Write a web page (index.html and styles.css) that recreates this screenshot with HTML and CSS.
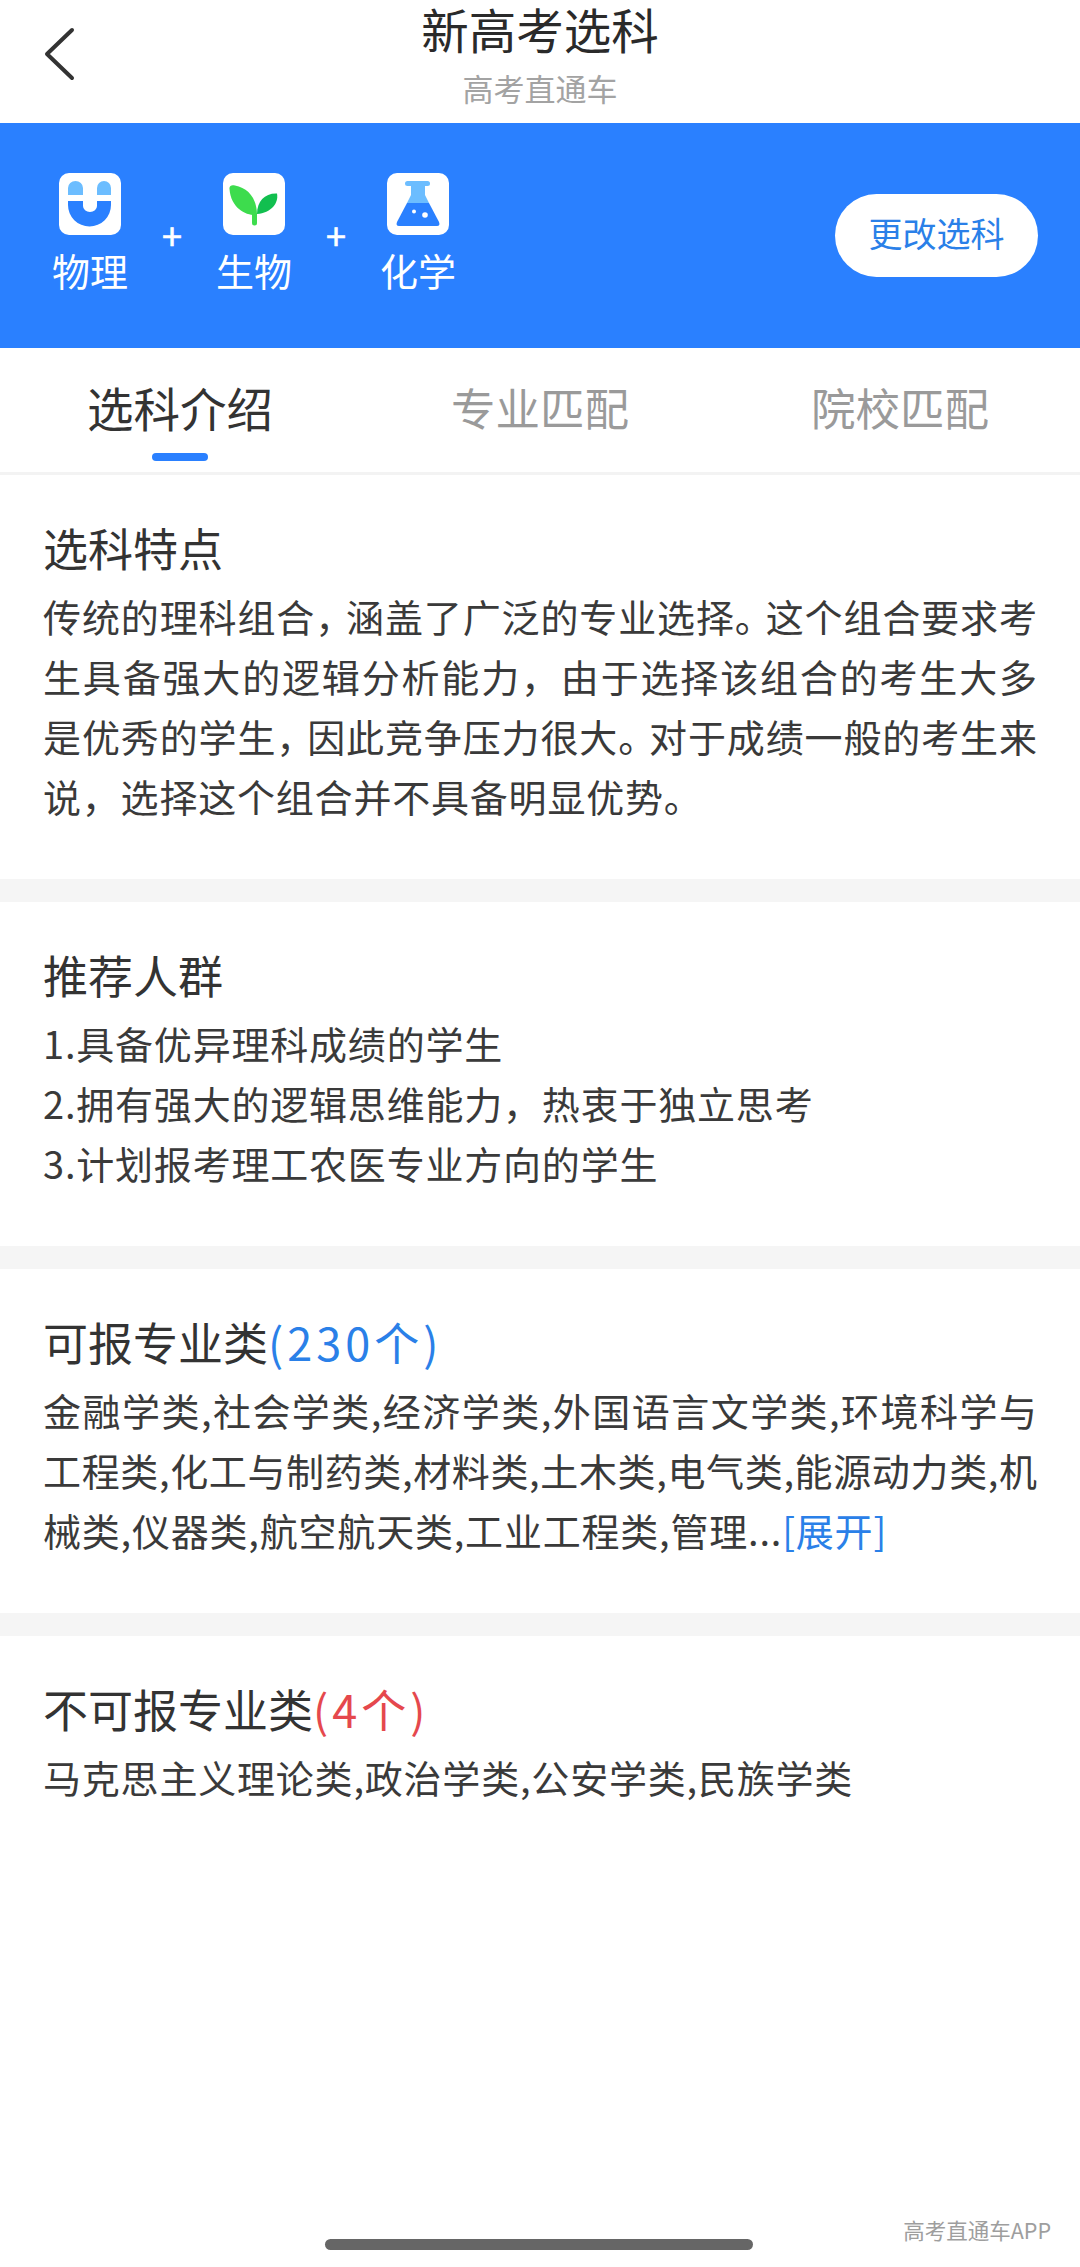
FILE: index.html
```html
<!DOCTYPE html>
<html lang="zh-CN">
  <head>
    <meta charset="UTF-8" />
    <title>新高考选科</title>
    <link rel="stylesheet" href="styles.css">
  </head>
  <body>
    <div class="page">
      <!-- ヘッダー -->
      <header class="top-bar">
        <svg class="back" width="36" height="56" viewBox="0 0 36 56">
          <path d="M31 4 L6 28 L31 52" fill="none" stroke="#333" stroke-width="4" stroke-linecap="round" stroke-linejoin="round" />
        </svg>
        <h1 class="page-title">新高考选科</h1>
        <p class="page-sub">高考直通车</p>
      </header>

      <!-- 選択科目 -->
      <section class="subject-bar">
        <div class="subjects">
          <div class="subject">
            <svg class="tile" viewBox="0 0 62 62">
              <rect width="62" height="62" rx="10" fill="#fff" />
              <path d="M9 15 a7.5 7 0 0 1 15 0 V22 H9 Z" fill="#6cbdff" />
              <path d="M38 15 a7 7 0 0 1 14 0 V22 H38 Z" fill="#6cbdff" />
              <path d="M9 28 H24 V33 a7 6 0 0 0 14 0 V28 H52 V32 a21.5 21.5 0 0 1 -43 0 Z" fill="#2a80ff" />
            </svg>
            <span class="subject-name">物理</span>
          </div>
          <span class="plus">+</span>
          <div class="subject">
            <svg class="tile" viewBox="0 0 62 62">
              <rect width="62" height="62" rx="10" fill="#fff" />
              <path d="M29 40 H34 V50 a2.5 2.5 0 0 1 -5 0 Z" fill="#3ddc4d" />
              <path d="M34 42 C24 43 8 36 6.500 16 C6 12.500 9 11.500 12 12.500 C25 15 34 25 34 42 Z" fill="#3ddc4d" />
              <path d="M34 41 C34 28 42 20 54 20.500 C56 30 48 40 34 41 Z" fill="#12bf4f" />
            </svg>
            <span class="subject-name">生物</span>
          </div>
          <span class="plus">+</span>
          <div class="subject">
            <svg class="tile" viewBox="0 0 62 62">
              <rect width="62" height="62" rx="10" fill="#fff" />
              <rect x="18" y="8" width="25" height="5" rx="2.500" fill="#6cbdff" />
              <path d="M24 13 H38 V22 L42 30 H20 L24 22 Z" fill="#6cbdff" />
              <path d="M20 30 H42 L52 49 Q53.500 53 50 53 H12 Q8.500 53 10 49 Z" fill="#2a80ff" />
              <circle cx="27" cy="38.500" r="2" fill="#fff" />
              <circle cx="38" cy="42" r="2.800" fill="#fff" />
            </svg>
            <span class="subject-name">化学</span>
          </div>
        </div>
        <button class="change-btn">更改选科</button>
      </section>

      <!-- タブ -->
      <nav class="tabs">
        <div class="tab tab-active">选科介绍</div>
        <div class="tab">专业匹配</div>
        <div class="tab">院校匹配</div>
      </nav>

      <section class="block">
        <h2 class="block-title">选科特点</h2>
        <p class="block-text fit">传统的理科组合<span class="tight">，</span>涵盖了广泛的专业选择<span class="tight">。</span>这个组合要求考</p>
        <p class="block-text fit">生具备强大的逻辑分析能力，由于选择该组合的考生大多</p>
        <p class="block-text fit">是优秀的学生<span class="tight">，</span>因此竞争压力很大<span class="tight">。</span>对于成绩一般的考生来</p>
        <p class="block-text">说，选择这个组合并不具备明显优势。</p>
      </section>

      <section class="block">
        <h2 class="block-title">推荐人群</h2>
        <p class="block-text">1.具备优异理科成绩的学生</p>
        <p class="block-text">2.拥有强大的逻辑思维能力，热衷于独立思考</p>
        <p class="block-text">3.计划报考理工农医专业方向的学生</p>
      </section>

      <section class="block">
        <h2 class="block-title">可报专业类<span class="count count-blue">(230个)</span></h2>
        <p class="block-text fit">金融学类,社会学类,经济学类,外国语言文学类,环境科学与</p>
        <p class="block-text fit">工程类,化工与制药类,材料类,土木类,电气类,能源动力类,机</p>
        <p class="block-text">械类,仪器类,航空航天类,工业工程类,管理...<span class="more">[展开]</span></p>
      </section>

      <section class="block block-last">
        <h2 class="block-title">不可报专业类<span class="count count-red">(4个)</span></h2>
        <p class="block-text">马克思主义理论类,政治学类,公安学类,民族学类</p>
      </section>

      <div class="watermark">高考直通车APP</div>
      <div class="home-bar"></div>
    </div>
  </body>
</html>
```

FILE: styles.css
```css
* {
  box-sizing: border-box;
}

body {
  margin: 0;
  background-color: white;
  font-family: "Noto Sans CJK SC", "Noto Sans", sans-serif;
  color: #333;
}

.page {
  position: relative;
  width: 1080px;
  height: 2267px;
  overflow: hidden;
}

/* ヘッダー */
.top-bar {
  position: relative;
  height: 123px;
  text-align: center;
}

.back {
  position: absolute;
  left: 41px;
  top: 26px;
}

.page-title {
  margin: 0;
  font-size: 47.5px;
  font-weight: 400;
  line-height: 58px;
  color: #2a2a2a;
}

.page-sub {
  margin: 0;
  font-size: 31px;
  line-height: 60px;
  color: #a3a3a3;
}

/* 選択科目 */
.subject-bar {
  height: 225px;
  padding: 0 42px 0 53px;
  background-color: #2a80ff;
  display: flex;
  justify-content: space-between;
  align-items: center;
}

.subjects {
  display: flex;
  align-items: center;
  padding-bottom: 1px;
}

.subject {
  width: 74px;
  display: flex;
  flex-direction: column;
  align-items: center;
}

.tile {
  width: 62px;
  height: 62px;
  display: block;
}

.subject-name {
  margin-top: 8px;
  margin-bottom: 1px;
  font-size: 38px;
  line-height: 54px;
  color: white;
  white-space: nowrap;
}

.plus {
  width: 90px;
  margin-top: -3px;
  font-size: 36px;
  line-height: 50px;
  text-align: center;
  color: white;
  -webkit-text-stroke: 0.6px white;
}

.change-btn {
  width: 203px;
  height: 83px;
  padding: 0 0 6px;
  border: none;
  border-radius: 42px;
  background-color: white;
  color: #2a80e8;
  font-family: inherit;
  font-size: 34px;
}

/* タブ */
.tabs {
  height: 127px;
  display: grid;
  grid-template-columns: 360px 360px 360px;
  border-bottom: 3px solid #f3f3f3;
}

.tab {
  position: relative;
  padding-top: 28px;
  font-size: 44.5px;
  line-height: 62px;
  text-align: center;
  color: #9a9a9a;
}

.tab-active {
  font-size: 46.5px;
  color: #333;
}

.tab-active::after {
  content: "";
  position: absolute;
  left: 152px;
  top: 105px;
  width: 56px;
  height: 8px;
  border-radius: 4px;
  background-color: #2a80ff;
}

/* 本文 */
.block {
  padding: 43px 43px 53px;
  border-bottom: 23px solid #f5f5f5;
}

.block-last {
  border-bottom: none;
}

.block-title {
  margin: 0 0 8px;
  font-size: 45px;
  font-weight: 400;
  line-height: 60px;
  color: #333;
}

.block-text {
  margin: 0;
  font-size: 38px;
  line-height: 60px;
  letter-spacing: 0.8px;
  white-space: nowrap;
  color: #3a3a3a;
}

/* 両端揃えの行 */
.fit {
  letter-spacing: 0;
  text-align: justify;
  text-align-last: justify;
}

.tight {
  letter-spacing: -8px;
}

.count {
  letter-spacing: 4px;
}

.count-blue,
.more {
  color: #2a80e8;
}

.count-red {
  color: #e5484d;
}

/* 下部 */
.watermark {
  position: absolute;
  right: 29px;
  top: 2216px;
  font-size: 21.5px;
  line-height: 28px;
  color: #9e9e9e;
}

.home-bar {
  position: absolute;
  left: 325px;
  top: 2239px;
  width: 428px;
  height: 11px;
  border-radius: 6px;
  background-color: #666;
}
```
